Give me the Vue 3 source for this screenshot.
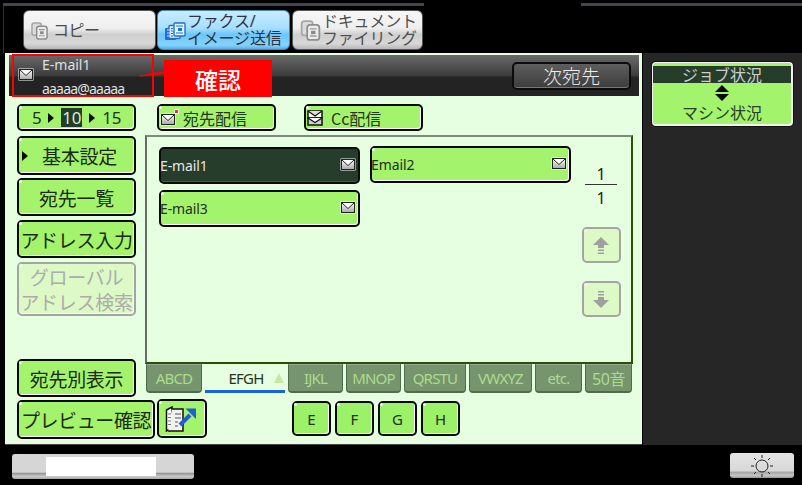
<script setup>
const tabs = [
  { label: 'ABCD', w: 56 },
  { label: 'EFGH', w: 80, active: true },
  { label: 'IJKL', w: 55 },
  { label: 'MNOP', w: 55 },
  { label: 'QRSTU', w: 62 },
  { label: 'VWXYZ', w: 63 },
  { label: 'etc.', w: 47 },
  { label: '50音', w: 47, wide: true }
]
const letters = ['E', 'F', 'G', 'H']
</script>

<template>
  <div class="screen">
    <svg class="defs" width="0" height="0" aria-hidden="true">
      <defs>
        <linearGradient id="envFill" x1="0" y1="0" x2="0" y2="1">
          <stop offset="0" stop-color="#ffffff" />
          <stop offset="1" stop-color="#a8a8a8" />
        </linearGradient>
        <symbol id="env" viewBox="0 0 16 13">
          <rect x="0.5" y="0.5" width="15" height="12" fill="#fff" />
          <rect x="1.5" y="1.5" width="13" height="10" fill="url(#envFill)" stroke="#222" stroke-width="1" />
          <path d="M2 2 L8 7.5 L14 2" fill="#fff" stroke="#222" stroke-width="1" />
        </symbol>
        <symbol id="copydoc" viewBox="0 0 18 19">
          <rect x="1" y="1" width="10" height="13" rx="2.5" fill="#dcdcdc" stroke="#a6a6a6" stroke-width="1.6" />
          <rect x="6" y="4.5" width="11" height="13.5" rx="2.5" fill="#ececec" stroke="#8e8e8e" stroke-width="1.6" />
          <path d="M8.5 8h6M8.5 14.5h6" stroke="#9a9a9a" stroke-width="1.2" />
          <rect x="9.5" y="9.8" width="4" height="3" fill="#8a8a8a" />
        </symbol>
        <symbol id="faxdoc" viewBox="0 0 22 19">
          <rect x="1" y="6" width="11" height="12" rx="1" fill="#1f6fd0" />
          <rect x="5" y="3.5" width="11" height="13" rx="1" fill="#e6f6ff" stroke="#1f6fd0" stroke-width="1.4" />
          <rect x="10" y="1" width="11" height="13" rx="1" fill="#e6f6ff" stroke="#1f6fd0" stroke-width="1.4" />
          <path d="M3 8h6M3 11h6M3 14h6" stroke="#bfe8ff" stroke-width="1" />
          <path d="M7 6.500h2M7 9h2M7 11.500h2M7 14h2" stroke="#1f6fd0" stroke-width="1" />
          <path d="M12 4h7M12 11h7" stroke="#1f6fd0" stroke-width="1.1" />
          <rect x="14" y="6" width="4" height="3" fill="#1f6fd0" />
        </symbol>
      </defs>
    </svg>

    <div class="strip"><span class="strip-a"></span><span class="strip-b"></span></div>

    <nav class="modes">
      <div class="mode mode-copy">
        <svg class="mode-icon"><use href="#copydoc" /></svg>
        <span class="mode-one">コピー</span>
      </div>
      <div class="mode mode-fax">
        <svg class="fax-icon"><use href="#faxdoc" /></svg>
        <span class="mode-two">ファクス/<br />イメージ送信</span>
      </div>
      <div class="mode mode-doc">
        <svg class="mode-icon doc-icon"><use href="#copydoc" /></svg>
        <span class="mode-two grey-text">ドキュメント<br />ファイリング</span>
      </div>
    </nav>

    <div class="middle">
      <main class="main">
        <header class="head">
          <div class="head-id">
            <svg class="head-env"><use href="#env" /></svg>
            <div class="head-lines">
              <span>E-mail1</span>
              <span class="head-addr">aaaaa@aaaaa</span>
            </div>
          </div>
          <button class="next">次宛先</button>
        </header>

        <div class="upper">
          <aside class="left">
            <div class="btn counts">
              <span>5</span><i class="tri"></i><b>10</b><i class="tri"></i><span>15</span>
            </div>
            <div class="btn big basic"><i class="tri basic-tri"></i>基本設定</div>
            <div class="btn big list-btn">宛先一覧</div>
            <div class="btn big addr">アドレス入力</div>
            <div class="btn big off global">グローバル<br />アドレス検索</div>
            <div class="btn big per">宛先別表示</div>
          </aside>

          <section class="right">
            <div class="send-row">
              <div class="btn send">
                <span class="send-icon">
                  <svg class="send-env"><use href="#env" /></svg>
                  <i class="red-dot"></i>
                </span>
                宛先配信
              </div>
              <div class="btn send cc">
                <svg class="cc-icon" viewBox="0 0 16 16">
                  <rect x="1" y="1" width="14" height="7" fill="#fff" stroke="#111" stroke-width="1.500" />
                  <path d="M1 1 L8 6 L15 1" fill="#ddd" stroke="#111" stroke-width="1.200" />
                  <rect x="1" y="8" width="14" height="7" fill="#cfcfcf" stroke="#111" stroke-width="1.500" />
                  <path d="M1 8 L8 12.500 L15 8" fill="#fff" stroke="#111" stroke-width="1.200" />
                </svg>
                Cc配信
              </div>
            </div>

            <div class="panel">
              <div class="entries">
                <div class="btn entry selected">E-mail1<svg class="entry-env"><use href="#env" /></svg></div>
                <div class="btn entry second">Email2<svg class="entry-env"><use href="#env" /></svg></div>
                <div class="btn entry">E-mail3<svg class="entry-env"><use href="#env" /></svg></div>
              </div>
              <div class="pager">
                <span class="page-num">1</span>
                <span class="page-line"></span>
                <span class="page-num">1</span>
                <div class="btn off page-btn up">
                  <svg viewBox="0 0 16 17" class="page-arrow"><path d="M8 0 L16 8 H11 V11 H5 V8 H0 Z M5 12.5 H11 V14 H5 Z M5 15.5 H11 V17 H5 Z" fill="#a0a0a0" /></svg>
                </div>
                <div class="btn off page-btn down">
                  <svg viewBox="0 0 16 17" class="page-arrow"><path d="M8 17 L16 9 H11 V6 H5 V9 H0 Z M5 4.5 H11 V3 H5 Z M5 1.5 H11 V0 H5 Z" fill="#a0a0a0" /></svg>
                </div>
              </div>
            </div>

            <div class="tabs">
              <div
                v-for="t in tabs"
                :key="t.label"
                class="tab"
                :class="{ active: t.active, wide: t.wide }"
                :style="{ width: t.w + 'px' }"
              >
                {{ t.label }}<i v-if="t.active" class="tab-tri"></i>
              </div>
            </div>
          </section>
        </div>

        <div class="lower">
          <div class="btn big preview">プレビュー確認</div>
          <div class="btn book">
            <svg viewBox="0 0 32 26" class="book-icon">
              <path d="M1.500 4 L7 1 V21 L1.500 25 Z" fill="#fff" stroke="#111" stroke-width="1.500" />
              <path d="M7 3 H18 V25 H3" fill="#f2f2f2" stroke="#111" stroke-width="1.500" />
              <path d="M3 8h3M3 11.500h3M3 15h3M3 18.500h3" stroke="#777" stroke-width="1" />
              <path d="M10 8h6M10 12h6M10 16h3M10 20h3" stroke="#555" stroke-width="1" />
              <path d="M15 19 L25 9" stroke="#1f5fd0" stroke-width="4" />
              <path d="M20.500 2.500 H31 V13 Z" fill="#1f5fd0" />
            </svg>
          </div>
          <div class="letters">
            <div v-for="l in letters" :key="l" class="btn letter">{{ l }}</div>
          </div>
        </div>
      </main>

      <aside class="side">
        <div class="status">
          <div class="status-head">ジョブ状況</div>
          <div class="status-arrows"><i class="arrow-up"></i><i class="arrow-down"></i></div>
          <div class="status-foot">マシン状況</div>
        </div>
      </aside>
    </div>

    <footer class="bottom">
      <div class="slider"><span class="slider-thumb"></span></div>
      <div class="sun">
        <svg viewBox="0 0 22 22" class="sun-icon">
          <circle cx="11" cy="11" r="6" fill="none" stroke="#222" stroke-width="1" />
          <path d="M11 0v3M11 19v3M0 11h3M19 11h3M3 3l2 2M17 17l2 2M3 19l2-2M17 5l2-2" stroke="#222" stroke-width="1" />
        </svg>
      </div>
    </footer>

    <div class="mark-box"></div>
    <svg class="mark-line" viewBox="0 0 26 8"><path d="M0 6 L24 1.500 V3.500 Z" fill="#f00" stroke="#f00" stroke-width="1" /></svg>
    <div class="mark-label">確認</div>
  </div>
</template>

<style scoped>
.screen {
  position: relative;
  width: 802px;
  height: 485px;
  overflow: hidden;
  background: #000;
  display: flex;
  flex-direction: column;
  font-family: "Noto Sans", "Noto Sans CJK JP", sans-serif;
  color: #1c2a14;
}
.defs { position: absolute; }

.strip {
  display: flex;
  justify-content: space-between;
  height: 3px;
  margin: 3px 0 0 3px;
}
.strip-a { width: 421px; background: #45454f; }
.strip-b { width: 221px; background: #45454f; }

.modes {
  display: flex;
  box-sizing: border-box;
  height: 47px;
  margin-left: 3px;
  padding: 4px 0 0 19px;
  border-left: 1px solid #2e2e34;
}
.mode {
  height: 40px;
  box-sizing: border-box;
  border: 1px solid #555;
  border-radius: 6px;
  display: flex;
  align-items: center;
  background: linear-gradient(#f6f6f6 0%, #efefef 45%, #cfcfcf 62%, #d8d8d8 85%, #b8b8b8 100%);
  color: #4a4a4a;
  font-size: 16px;
  line-height: 17px;
}
.mode-copy { width: 133px; padding-left: 7px; margin-right: 1px; }
.mode-fax {
  width: 133px;
  padding-left: 6px;
  margin-right: 2px;
  color: #2b3440;
  border-color: #4a86b8;
  background: linear-gradient(#c8ecff 0%, #a6dfff 45%, #6cc6fb 62%, #86d2fc 90%, #55aee8 100%);
}
.mode-doc { width: 131px; padding-left: 7px; }
.mode-icon { width: 17px; height: 18px; flex: none; margin-top: 1px; }
.doc-icon { width: 21px; height: 21px; }
.fax-icon { width: 22px; height: 19px; flex: none; margin-top: 2px; }
.mode-one { margin-left: 5px; letter-spacing: -0.5px; }
.mode-two { margin-left: 1px; white-space: nowrap; letter-spacing: -0.2px; }
.grey-text { color: #4e4e4e; }

.middle {
  display: flex;
  height: 392px;
  margin-left: 5px;
}
.main {
  width: 637px;
  background: #e6ffe0;
  display: flex;
  flex-direction: column;
  box-shadow: inset 0 -1px 0 #444;
}
.side {
  flex: 1;
  background: #262626;
  padding: 9px 9px 0 9px;
  margin-left: 1px;
}

.head {
  height: 41px;
  margin: 2px 3px 0 4px;
  padding-right: 8px;
  display: flex;
  align-items: center;
  justify-content: space-between;
  background: linear-gradient(#6a6a6a 0%, #3a3a3a 52%, #232323 53%, #232323 100%);
  color: #e0e0e0;
  font-size: 14px;
}
.head-id { display: flex; align-items: center; padding-left: 9px; padding-top: 3px; }
.head-env { width: 16px; height: 13px; margin-right: 8px; margin-top: -6px; }
.head-lines {
  display: flex;
  flex-direction: column;
  gap: 4px;
  line-height: 20px;
}
.head-addr { letter-spacing: -0.8px; }
.next {
  width: 119px;
  height: 28px;
  padding: 0;
  border: 2px solid #0c0c0c;
  border-radius: 5px;
  background: linear-gradient(#5e5e5e, #3c3c3c);
  color: #ececec;
  font: 300 19px/24px "Noto Sans CJK JP", sans-serif;
  box-shadow: inset 0 -1px 0 #777;
}

.btn {
  position: relative;
  box-sizing: border-box;
  display: flex;
  align-items: center;
  justify-content: center;
  border: 2px solid #0a0a0a;
  border-radius: 5px;
  background: #a3f36c;
  box-shadow: inset -1px -1px 0 #fff;
  white-space: nowrap;
}
.btn::before {
  content: "";
  position: absolute;
  left: 0;
  top: 0;
  width: 3px;
  height: 3px;
  background: #f4f4f4;
  border-radius: 2px;
}
.big {
  font: 400 19px/25px "Noto Sans CJK JP", sans-serif;
  letter-spacing: -0.3px;
}
.off {
  border-color: #a4a4a4;
  background: #dcf9c6;
  color: #acacac;
  text-align: center;
}

.upper { display: flex; height: 293px; margin-top: 8px; padding-left: 12px; }
.left { width: 119px; display: flex; flex-direction: column; }
.counts {
  height: 27px;
  flex: none;
  gap: 7px;
  font-size: 17px;
  letter-spacing: -0.3px;
  color: #1f3318;
}
.counts b {
  font-weight: 400;
  background: #233d2a;
  color: #dbe8d0;
  padding: 0 1px;
  line-height: 19px;
}
.tri {
  display: inline-block;
  width: 0;
  height: 0;
  border-left: 6px solid #0c0c0c;
  border-top: 5px solid transparent;
  border-bottom: 5px solid transparent;
}
.basic { height: 39px; flex: none; margin-top: 5px; padding-left: 6px; }
.basic-tri { position: absolute; left: 3px; top: 13px; }
.list-btn { height: 38px; flex: none; margin-top: 3px; }
.addr { height: 38px; flex: none; margin-top: 4px; }
.global { height: 54px; flex: none; margin-top: 4px; }
.per { height: 38px; flex: none; margin-top: auto; }

.right { width: 488px; margin-left: 9px; display: flex; flex-direction: column; }
.send-row { display: flex; gap: 28px; margin-left: 12px; height: 31px; flex: none; }
.send {
  width: 119px;
  height: 27px;
  justify-content: flex-start;
  padding-left: 1px;
  font: 400 16px/20px "Noto Sans CJK JP", sans-serif;
  color: #24361c;
}
.send-icon { position: relative; flex: none; width: 16px; height: 16px; margin-right: 7px; }
.send-env { position: absolute; left: 0; top: 3px; width: 16px; height: 13px; }
.red-dot {
  position: absolute;
  right: -2px;
  top: 0;
  width: 3px;
  height: 3px;
  background: #e8304a;
  box-shadow: 0 0 0 1px #fff;
}
.cc-icon { flex: none; width: 16px; height: 16px; margin-right: 8px; }

.panel {
  box-sizing: border-box;
  height: 229px;
  flex: none;
  display: flex;
  padding: 10px 0 0 12px;
  border-top: 2px solid #7f8a7c;
  border-left: 2px solid #6a6a6a;
  border-right: 2px solid #2c5000;
  border-bottom: 2px solid #2c5000;
}
.entries {
  width: 412px;
  display: grid;
  grid-template-columns: 201px 201px;
  grid-auto-rows: 37px;
  column-gap: 10px;
  row-gap: 6px;
  align-content: start;
}
.entry {
  justify-content: space-between;
  padding: 0 2px 0 0;
  font-size: 14px;
  line-height: 20px;
  text-indent: -1px;
  color: #1f2f18;
  letter-spacing: -0.1px;
}
.second { margin-top: -1px; height: 37px; }
.entry-env { width: 16px; height: 13px; margin-top: -3px; }
.selected {
  background: #263d2c;
  color: #e6e6e6;
  box-shadow: inset 0 -1px 0 #3e6a20;
}
.selected::before { display: none; }
.pager {
  margin-left: 10px;
  width: 40px;
  display: flex;
  flex-direction: column;
  align-items: center;
  padding-top: 21px;
  color: #222;
  font-size: 16px;
}
.page-num { line-height: 12px; height: 12px; }
.page-line { width: 32px; height: 1px; background: #333; margin: 4px 0 7px; }
.page-btn { width: 39px; height: 36px; flex: none; background: #dcf9c6; box-shadow: none; }
.up { margin-top: 23px; }
.down { margin-top: 18px; }
.page-arrow { width: 16px; height: 17px; }

.tabs { display: flex; gap: 3px; height: 29px; margin-left: 1px; }
.tab {
  box-sizing: border-box;
  height: 29px;
  flex: none;
  display: flex;
  align-items: center;
  justify-content: center;
  background: #76956f;
  color: #aedb8c;
  font-size: 15px;
  border-radius: 0 0 4px 4px;
  border: 1px solid #4e6c4a;
  border-top: 1px solid #9aa89a;
  border-bottom-width: 2px;
  letter-spacing: -0.8px;
}
.tab.wide { font-size: 16px; letter-spacing: -0.4px; }
.tab.active {
  position: relative;
  background: transparent;
  color: #26351f;
  border: none;
  border-bottom: 3px solid #1863d6;
  border-radius: 0;
  padding-left: 2px;
  padding-top: 1px;
}
.tab-tri {
  position: absolute;
  right: 1px;
  top: 9px;
  border-left: 5px solid transparent;
  border-right: 5px solid transparent;
  border-bottom: 10px solid #c8e7a4;
}

.lower { display: flex; align-items: flex-start; padding-left: 12px; margin-top: 2px; }
.preview { width: 138px; height: 39px; margin-top: 1px; font-size: 19px; letter-spacing: -0.4px; }
.book { width: 50px; height: 39px; margin-left: 2px; }
.book-icon { width: 32px; height: 26px; margin-right: 2px; }
.letters { display: flex; gap: 4px; margin-left: 85px; margin-top: 2px; }
.letter { width: 39px; height: 35px; font-size: 15px; color: #1f2f18; background: #9bf268; }

.status {
  height: 64px;
  width: 141px;
  box-sizing: border-box;
  border: 1px solid #f2f2f2;
  border-width: 1px 2px 2px 1px;
  border-radius: 4px;
  background: #a3f36c;
  display: flex;
  flex-direction: column;
  align-items: center;
  font: 400 16px/20px "Noto Sans CJK JP", sans-serif;
  color: #27422c;
  box-shadow: 0 0 0 1px #111;
}
.status-head {
  width: 100%;
  height: 17px;
  margin-top: 3px;
  background: #263d2c;
  color: #c8cfc8;
  text-align: center;
  line-height: 17px;
}
.status-arrows { display: flex; flex-direction: column; gap: 2px; margin-top: 2px; }
.arrow-up, .arrow-down {
  display: block;
  width: 0;
  height: 0;
  border-left: 7px solid transparent;
  border-right: 7px solid transparent;
}
.arrow-up { border-bottom: 7px solid #0a0a0a; }
.arrow-down { border-top: 7px solid #0a0a0a; }
.status-foot { margin-top: 1px; }

.bottom {
  flex: 1;
  display: flex;
  justify-content: space-between;
  align-items: flex-start;
  padding: 8px 8px 0 12px;
}
.slider {
  width: 182px;
  height: 25px;
  margin-top: 1px;
  box-sizing: border-box;
  border-radius: 3px;
  padding: 3px 0 3px 34px;
  background: linear-gradient(#d6d6d6 0%, #d6d6d6 72%, #9a9a9a 78%, #c8c8c8 90%, #aaa 100%);
}
.slider-thumb { display: block; width: 110px; height: 19px; background: #fff; }
.sun {
  width: 64px;
  height: 25px;
  border-radius: 3px;
  display: flex;
  justify-content: center;
  align-items: center;
  background: linear-gradient(#e4e4e4 0%, #d8d8d8 70%, #a8a8a8 78%, #c4c4c4 90%, #999 100%);
}
.sun-icon { width: 22px; height: 22px; }

.mark-box {
  position: absolute;
  left: 12px;
  top: 54px;
  width: 142px;
  height: 43px;
  box-sizing: border-box;
  border: 2px solid #f00;
}
.mark-line {
  position: absolute;
  left: 140px;
  top: 70px;
  width: 26px;
  height: 8px;
}
.mark-label {
  position: absolute;
  left: 164px;
  top: 60px;
  width: 108px;
  height: 37px;
  background: #f00;
  color: #fff;
  display: flex;
  align-items: center;
  justify-content: center;
  font: 500 23px/30px "Noto Sans CJK JP", sans-serif;
}
</style>
